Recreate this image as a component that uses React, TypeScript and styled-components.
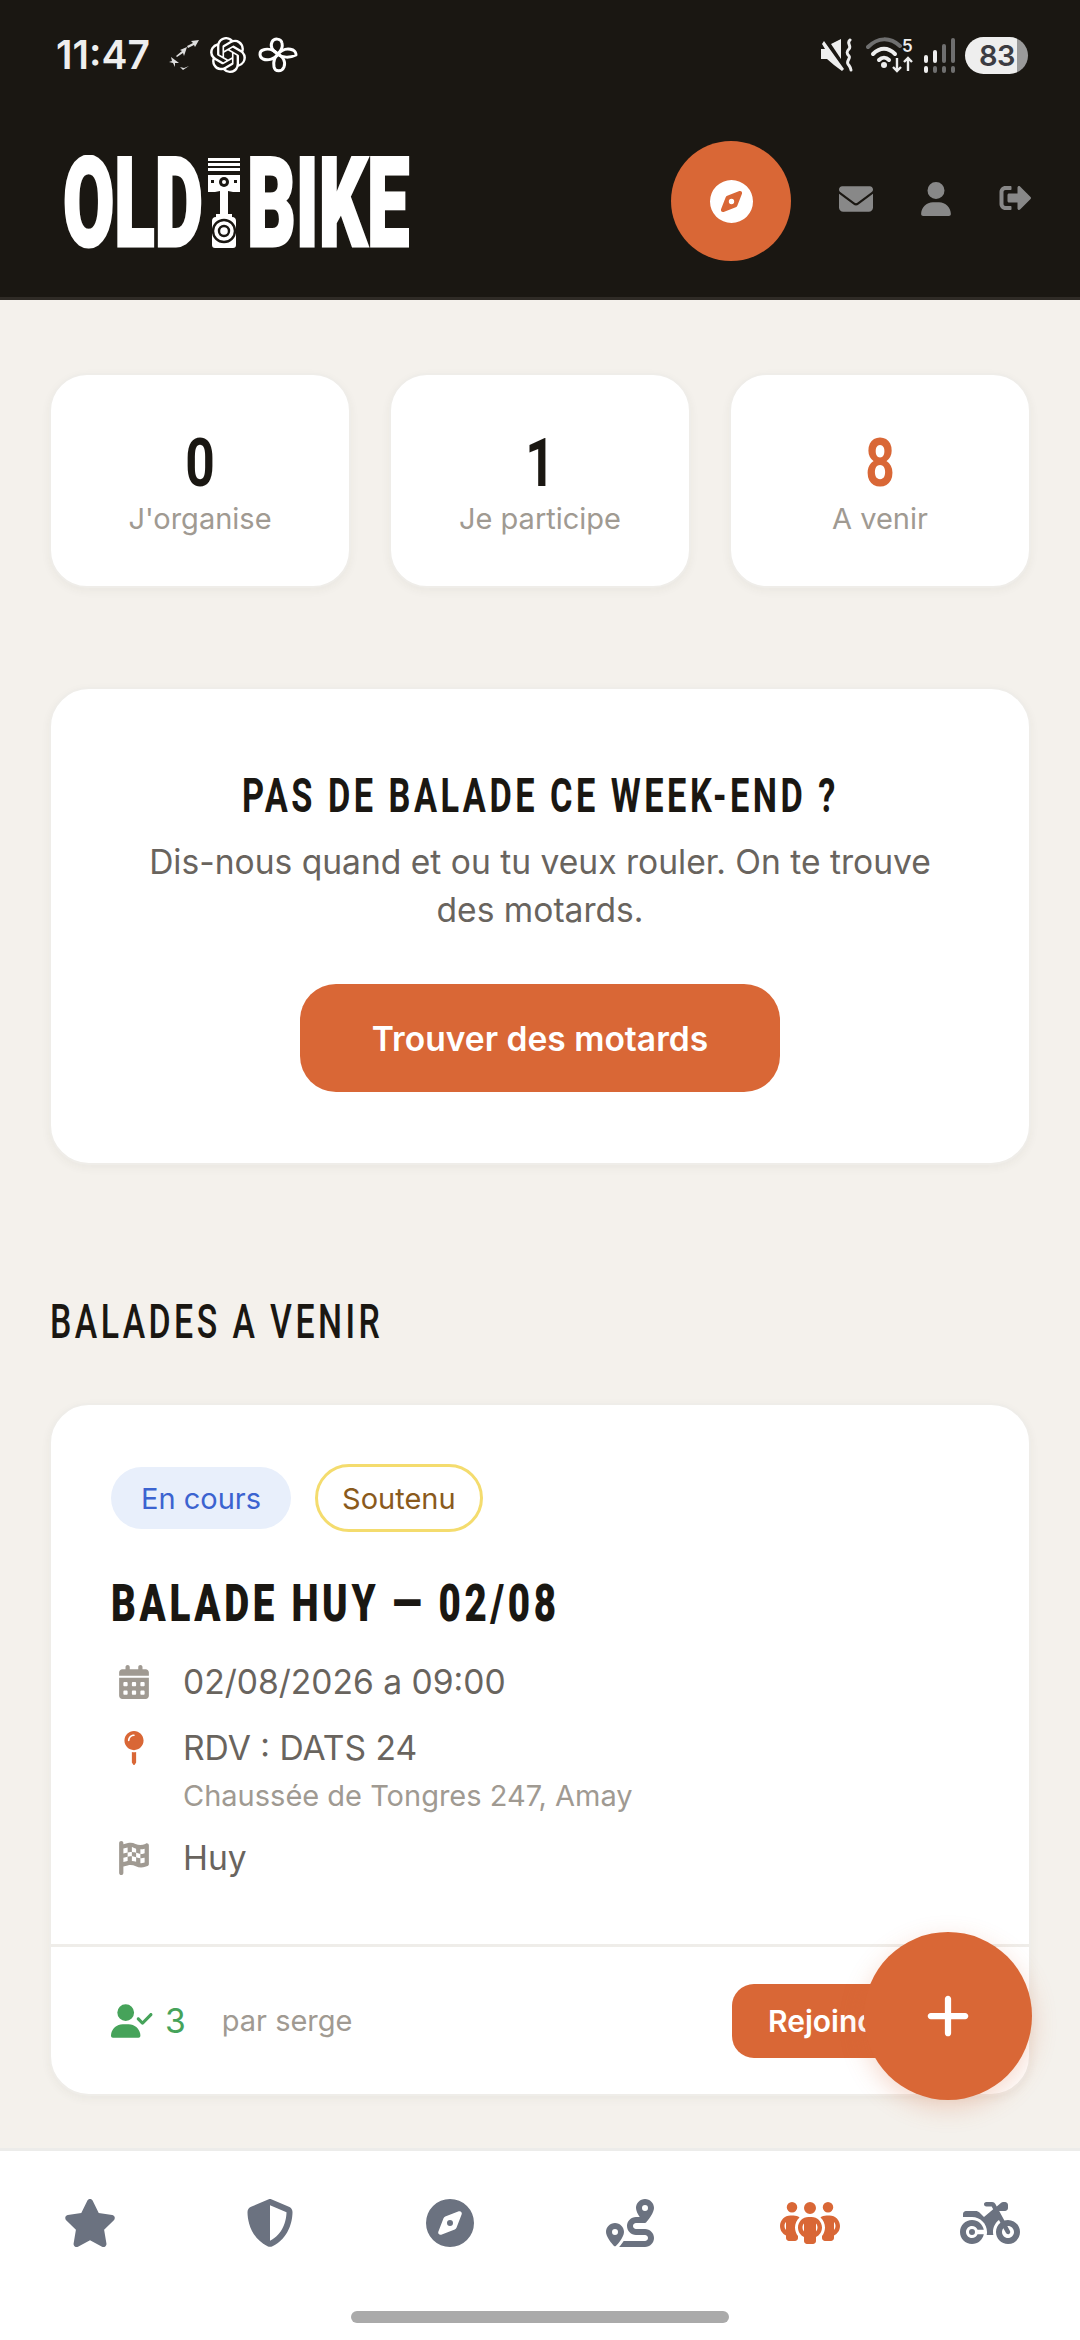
import React from 'react'
import styled, { createGlobalStyle, css } from 'styled-components'
import {
  FaStar, FaShieldHalved, FaCompass, FaRoute, FaPeopleGroup, FaMotorcycle,
  FaEnvelope, FaUser, FaCalendarDays, FaFlagCheckered, FaUserCheck, FaPlus,
} from 'react-icons/fa6'
import { FaMapPin, FaSignOutAlt } from 'react-icons/fa'
import { SiOpenai } from 'react-icons/si'

const orange = '#d96736'
const ink = '#1a1712'
const muted = '#a09a92'
const body = '#69645e'
const slate = '#6b7280'

// no condensed face is installed, so Roboto gets squeezed to read like the app's headings
const condensed = (ratio: number, origin: string) => css`
  display: inline-block;
  font-family: Roboto, "Liberation Sans", sans-serif;
  transform: scaleX(${ratio});
  transform-origin: ${origin} center;
  white-space: nowrap;
`

const Global = createGlobalStyle`
  html, body { margin: 0; padding: 0; background: #f4f1ec; }
  * { box-sizing: border-box; }
  body { font-family: Inter, "Liberation Sans", sans-serif; }
`

const Page = styled.div`
  position: relative;
  width: 1080px;
  height: 2340px;
  overflow: hidden;
  display: flex;
  flex-direction: column;
  background: #f4f1ec;
`

const Header = styled.header`
  height: 300px;
  flex-shrink: 0;
  background: #1a1712;
  border-bottom: 3px solid #2f2b26;
  display: flex;
  flex-direction: column;
`

const StatusBar = styled.div`
  height: 110px;
  padding: 36px 52px 0 56px;
  display: flex;
  align-items: flex-start;
  color: #eeeeee;
`

const Time = styled.span`
  font-size: 39px;
  line-height: 38px;
  font-weight: 600;
  margin-right: 8px;
`

const StatusLeft = styled.div`
  display: flex;
  align-items: center;
  gap: 10px;
  height: 38px;
  svg { display: block; }
`

const StatusRight = styled.div`
  margin-left: auto;
  display: flex;
  align-items: center;
  gap: 10px;
  height: 38px;
  svg { display: block; }
`

const Battery = styled.div`
  width: 63px;
  height: 37px;
  border-radius: 19px;
  background: linear-gradient(90deg, #eeeeee 83%, #9a9a9a 83%);
  color: #3c3c42;
  font-size: 29px;
  font-weight: 600;
  line-height: 37px;
  padding-left: 14px;
  letter-spacing: -0.5px;
`

const HeaderRow = styled.div`
  flex: 1;
  display: flex;
  align-items: flex-start;
  padding-left: 62px;
`

const Logo = styled.svg`
  width: 350px;
  height: 95px;
  margin-top: 45px;
  flex-shrink: 0;
`

const CompassButton = styled.div`
  margin-left: 259px;
  margin-top: 31px;
  width: 120px;
  height: 120px;
  border-radius: 50%;
  background: ${orange};
  color: #ffffff;
  display: flex;
  align-items: center;
  justify-content: center;
  flex-shrink: 0;
`

const HeaderIcon = styled.div<{ $ml: number; $mt: number; $w: number; $h: number }>`
  margin-left: ${p => p.$ml}px;
  margin-top: ${p => p.$mt}px;
  width: ${p => p.$w}px;
  height: ${p => p.$h}px;
  color: #888888;
  flex-shrink: 0;
  svg { display: block; width: 100%; height: 100%; }
`

const Main = styled.main`
  flex: 1;
  min-height: 0;
  padding: 73px 49px 0;
  display: flex;
  flex-direction: column;
`

const Stats = styled.div`
  display: grid;
  grid-template-columns: repeat(3, 302px);
  gap: 38px;
`

const Card = styled.div`
  background: #ffffff;
  border: 2px solid #efede9;
  box-shadow: 0 3px 10px rgba(60, 50, 40, 0.05);
`

const StatCard = styled(Card)`
  height: 215px;
  border-radius: 38px;
  display: flex;
  flex-direction: column;
  align-items: center;
  padding-top: 56px;
`

const StatValue = styled.div<{ $accent?: boolean }>`
  ${condensed(0.78, 'center')}
  font-weight: 700;
  font-size: 66px;
  line-height: 66px;
  color: ${p => (p.$accent ? orange : ink)};
`

const StatLabel = styled.div`
  margin-top: 4px;
  font-size: 29px;
  line-height: 36px;
  color: ${muted};
`

const CtaCard = styled(Card)`
  margin-top: 99px;
  height: 478px;
  border-radius: 40px;
  display: flex;
  flex-direction: column;
  align-items: center;
  padding: 79px 80px 0;
`

const CtaTitle = styled.h2`
  ${condensed(0.7, 'center')}
  margin: 0;
  font-weight: 700;
  font-size: 49px;
  line-height: 56px;
  letter-spacing: 5px;
  color: ${ink};
`

const CtaText = styled.p`
  margin: 14px 0 0;
  font-size: 33.6px;
  line-height: 48px;
  text-align: center;
  color: ${body};
`

const CtaButton = styled.div`
  margin-top: 50px;
  width: 480px;
  height: 108px;
  border-radius: 36px;
  background: ${orange};
  color: #ffffff;
  font-size: 33.6px;
  font-weight: 600;
  display: flex;
  align-items: center;
  justify-content: center;
`

const SectionTitle = styled.h2`
  ${condensed(0.69, 'left')}
  align-self: flex-start;
  margin: 129px 0 0 1px;
  font-weight: 500;
  font-size: 49px;
  line-height: 56px;
  letter-spacing: 5px;
  color: ${ink};
`

const RideCard = styled(Card)`
  margin-top: 53px;
  height: 693px;
  border-radius: 40px;
  display: flex;
  flex-direction: column;
`

const RideBody = styled.div`
  height: 542px;
  flex-shrink: 0;
  padding: 59px 60px 0;
  border-bottom: 3px solid #efede9;
`

const Badges = styled.div`
  display: flex;
  align-items: center;
  gap: 24px;
  height: 68px;
`

const Badge = styled.span<{ $outlined?: boolean }>`
  display: inline-flex;
  align-items: center;
  justify-content: center;
  border-radius: 34px;
  font-size: 29px;
  height: ${p => (p.$outlined ? 68 : 62)}px;
  padding: 0 ${p => (p.$outlined ? 24 : 30)}px;
  color: ${p => (p.$outlined ? '#8a5a1c' : '#3b63d0')};
  background: ${p => (p.$outlined ? '#ffffff' : '#e8effb')};
  border: ${p => (p.$outlined ? '3px solid #f4dc6e' : 'none')};
`

const RideTitle = styled.h3`
  ${condensed(0.74, 'left')}
  margin: 39px 0 0;
  font-weight: 900;
  font-size: 52px;
  line-height: 66px;
  letter-spacing: 5px;
  color: ${ink};
`

const Rows = styled.div`
  margin-top: 21px;
  display: flex;
  flex-direction: column;
`

const Row = styled.div<{ $mt?: number }>`
  display: flex;
  align-items: flex-start;
  margin-top: ${p => p.$mt ?? 0}px;
`

const RowIcon = styled.div<{ $accent?: boolean }>`
  width: 72px;
  height: 48px;
  flex-shrink: 0;
  display: flex;
  align-items: center;
  padding-left: 8px;
  color: ${p => (p.$accent ? orange : muted)};
  svg { display: block; height: 34px; width: 30px; }
`

const RowText = styled.div`
  font-size: 33.6px;
  line-height: 48px;
  color: ${body};
`

const RowSub = styled.div`
  font-size: 29px;
  line-height: 40px;
  margin-top: 4px;
  color: ${muted};
`

const RideFooter = styled.div`
  flex: 1;
  display: flex;
  align-items: center;
  padding: 0 57px 0 60px;
`

const Joined = styled.div`
  display: flex;
  align-items: center;
  gap: 12px;
  color: #46a35a;
  font-size: 33.6px;
  svg { display: block; width: 42px; height: 34px; }
`

const Author = styled.span`
  margin-left: 36px;
  font-size: 29px;
  color: ${muted};
`

const JoinButton = styled.div`
  margin-left: auto;
  height: 74px;
  width: 240px;
  border-radius: 22px;
  background: ${orange};
  color: #ffffff;
  font-size: 30px;
  font-weight: 600;
  display: flex;
  align-items: center;
  padding-left: 36px;
`

const Fab = styled.div`
  position: absolute;
  left: 864px;
  top: 1932px;
  width: 168px;
  height: 168px;
  border-radius: 50%;
  background: ${orange};
  color: #ffffff;
  box-shadow: 0 8px 24px rgba(217, 103, 54, 0.25);
  display: flex;
  align-items: center;
  justify-content: center;
`

const Nav = styled.nav`
  height: 192px;
  flex-shrink: 0;
  background: #ffffff;
  border-top: 3px solid #ececea;
  display: flex;
  flex-direction: column;
  align-items: center;
`

const NavItems = styled.div`
  width: 100%;
  display: grid;
  grid-template-columns: repeat(6, 1fr);
  padding-top: 48px;
`

const NavItem = styled.div<{ $active?: boolean; $w: number }>`
  height: 48px;
  display: flex;
  align-items: center;
  justify-content: center;
  color: ${p => (p.$active ? orange : slate)};
  svg { display: block; height: 48px; width: ${p => p.$w}px; flex-shrink: 0; }
`

const HomeBar = styled.div`
  margin-top: 64px;
  width: 378px;
  height: 12px;
  border-radius: 6px;
  background: #aaaaaa;
`

const Birds = () => (
  <svg width="32" height="32" viewBox="0 0 32 32" fill="#dddddd">
    <path d="M31 1l-8 1 2 2-6 3 1 2 6-3 1 2z" />
    <path d="M19 8l-7 3 2 1-6 5 1 1 6-4 1 3z" />
    <path d="M3 18l1 4-3 1 4 1 2 4 0-4 4 0-4-3z" />
    <path d="M12 28l3 3 6-4-5 2z" />
  </svg>
)

const Pinwheel = () => (
  <svg width="44" height="38" viewBox="0 0 44 38" fill="none" stroke="#ffffff" strokeWidth="3" strokeLinejoin="round">
    <path d="M22 18c-6-3-8-8-6-12 2-4 9-4 10 1 1 4-1 8-4 11z" />
    <path d="M22 18c4-5 10-6 15-4 3 2 3 3 3 5-6 3-14 3-18-1z" />
    <path d="M22 18c5 3 8 8 6 13-2 5-9 5-10 0-1-5 1-10 4-13z" />
    <path d="M22 18c-3 5-10 7-15 5-4-2-4-8 0-9 5-2 11 0 15 4z" />
  </svg>
)

const Mute = () => (
  <svg width="36" height="34" viewBox="0 0 36 34" fill="#eeeeee">
    <path d="M1 11h4L2 6l2-3 20 28-2 2-8-6-7-6H1z" />
    <path d="M11 6l10-5v20z" />
    <path d="M30 2c-4 3 2 6-1 9s-2 5 0 7-3 5-1 8 3 4 3 6" fill="none" stroke="#eeeeee" strokeWidth="3" strokeLinecap="round" />
  </svg>
)

const Wifi = () => (
  <svg width="48" height="38" viewBox="0 0 48 38" fill="none">
    <path d="M2 11c10-10 22-10 32-1" stroke="#6f6f6f" strokeWidth="4" strokeLinecap="round" />
    <path d="M7 18c7-7 15-7 22 0" stroke="#eeeeee" strokeWidth="4" strokeLinecap="round" />
    <path d="M13 24c3-3 7-3 10 0" stroke="#eeeeee" strokeWidth="4" strokeLinecap="round" />
    <circle cx="18" cy="29" r="3" fill="#eeeeee" />
    <text x="36" y="16" fontSize="17" fontFamily="Inter, sans-serif" fontWeight="600" fill="#eeeeee">5</text>
    <path d="M31 22v13m-4-4l4 4 4-4M42 35V22m-4 4l4-4 4 4" stroke="#eeeeee" strokeWidth="2.4" />
  </svg>
)

const Signal = () => (
  <svg width="31" height="37" viewBox="0 0 31 37">
    <rect x="0" y="18" width="4" height="8" rx="2" fill="#eeeeee" />
    <rect x="0" y="29" width="4" height="7" rx="2" fill="#eeeeee" />
    <rect x="9" y="13" width="4" height="13" rx="2" fill="#eeeeee" />
    <rect x="9" y="29" width="4" height="7" rx="2" fill="#6f6f6f" />
    <rect x="18" y="7" width="4" height="19" rx="2" fill="#6f6f6f" />
    <rect x="18" y="29" width="4" height="7" rx="2" fill="#6f6f6f" />
    <rect x="27" y="1" width="4" height="25" rx="2" fill="#6f6f6f" />
    <rect x="27" y="29" width="4" height="7" rx="2" fill="#6f6f6f" />
  </svg>
)

// piston sits between the two words, the letters stay real text
const LogoMark = () => (
  <Logo viewBox="0 0 350 95">
    <g fontFamily='Roboto, "Liberation Sans", sans-serif' fontWeight="900" fontSize="124" fill="#ffffff" stroke="#ffffff" strokeWidth="3">
      <text transform="translate(1 91) scale(0.6 1)">OLD</text>
      <text transform="translate(185 91) scale(0.61 1)">BIKE</text>
    </g>
    <g fill="#ffffff">
      <rect x="146" y="3" width="32" height="3" />
      <rect x="146" y="8" width="32" height="3" />
      <rect x="146" y="13" width="32" height="3" />
      <path d="M146 20h32v17h-7l-5-1v24h-8V36l-5 1h-7z" />
      <path d="M154 59h16v3c3 0 4 2 4 4v24c0 2-1 3-3 3h-18c-2 0-3-1-3-3V66c0-2 1-4 4-4z" />
    </g>
    <circle cx="162" cy="27" r="5" fill="#1a1712" />
    <circle cx="162" cy="27" r="2" fill="#ffffff" />
    <rect x="149" y="25" width="3" height="3" fill="#1a1712" />
    <rect x="172" y="25" width="3" height="3" fill="#1a1712" />
    <circle cx="162" cy="76" r="11" fill="none" stroke="#1a1712" strokeWidth="2.4" />
    <circle cx="162" cy="76" r="5" fill="none" stroke="#1a1712" strokeWidth="2.4" />
  </Logo>
)

const navIcons = [
  { Icon: FaStar, w: 54 },
  { Icon: FaShieldHalved, w: 48 },
  { Icon: FaCompass, w: 48 },
  { Icon: FaRoute, w: 48 },
  { Icon: FaPeopleGroup, w: 60 },
  { Icon: FaMotorcycle, w: 60 },
]

export default function App() {
  return (
    <Page>
      <Global />
      <Header>
        <StatusBar>
          <StatusLeft>
            <Time>11:47</Time>
            <Birds />
            <SiOpenai size={36} color="#ffffff" />
            <Pinwheel />
          </StatusLeft>
          <StatusRight>
            <Mute />
            <Wifi />
            <Signal />
            <Battery>83</Battery>
          </StatusRight>
        </StatusBar>
        <HeaderRow>
          <LogoMark />
          <CompassButton>
            <FaCompass size={43} />
          </CompassButton>
          <HeaderIcon $ml={48} $mt={72} $w={34} $h={34}><FaEnvelope /></HeaderIcon>
          <HeaderIcon $ml={48} $mt={72} $w={30} $h={34}><FaUser /></HeaderIcon>
          <HeaderIcon $ml={47} $mt={72} $w={35} $h={32}><FaSignOutAlt /></HeaderIcon>
        </HeaderRow>
      </Header>

      <Main>
        <Stats>
          <StatCard>
            <StatValue>0</StatValue>
            <StatLabel>J'organise</StatLabel>
          </StatCard>
          <StatCard>
            <StatValue>1</StatValue>
            <StatLabel>Je participe</StatLabel>
          </StatCard>
          <StatCard>
            <StatValue $accent>8</StatValue>
            <StatLabel>A venir</StatLabel>
          </StatCard>
        </Stats>

        <CtaCard>
          <CtaTitle>PAS DE BALADE CE WEEK-END ?</CtaTitle>
          <CtaText>Dis-nous quand et ou tu veux rouler. On te trouve des motards.</CtaText>
          <CtaButton>Trouver des motards</CtaButton>
        </CtaCard>

        <SectionTitle>BALADES A VENIR</SectionTitle>

        <RideCard>
          <RideBody>
            <Badges>
              <Badge>En cours</Badge>
              <Badge $outlined>Soutenu</Badge>
            </Badges>
            <RideTitle>BALADE HUY — 02/08</RideTitle>
            <Rows>
              <Row>
                <RowIcon><FaCalendarDays /></RowIcon>
                <RowText>02/08/2026 a 09:00</RowText>
              </Row>
              <Row $mt={18}>
                <RowIcon $accent><FaMapPin /></RowIcon>
                <div>
                  <RowText>RDV : DATS 24</RowText>
                  <RowSub>Chaussée de Tongres 247, Amay</RowSub>
                </div>
              </Row>
              <Row $mt={18}>
                <RowIcon><FaFlagCheckered /></RowIcon>
                <RowText>Huy</RowText>
              </Row>
            </Rows>
          </RideBody>
          <RideFooter>
            <Joined><FaUserCheck />3</Joined>
            <Author>par serge</Author>
            <JoinButton>Rejoindre</JoinButton>
          </RideFooter>
        </RideCard>
      </Main>

      <Fab><FaPlus size={50} /></Fab>

      <Nav>
        <NavItems>
          {navIcons.map(({ Icon, w }, i) => (
            <NavItem key={i} $active={i === 4} $w={w}><Icon /></NavItem>
          ))}
        </NavItems>
        <HomeBar />
      </Nav>
    </Page>
  )
}
